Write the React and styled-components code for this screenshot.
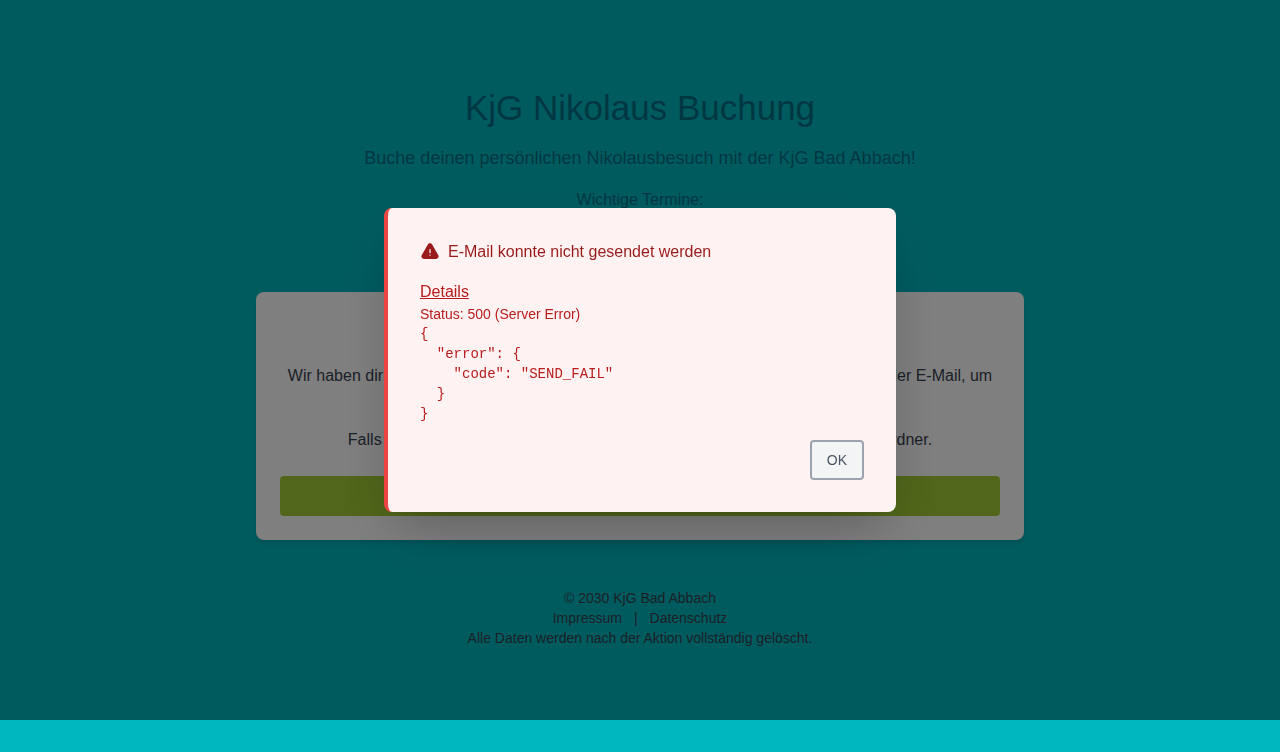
import React from "react";
import styled, { createGlobalStyle, css } from "styled-components";

const GlobalStyle = createGlobalStyle`
  *, *::before, *::after { box-sizing: border-box; }
  body {
    margin: 0;
    background: #00b7bf;
    color: #374151;
    font-family: "Liberation Sans", Arial, sans-serif;
    font-size: 16px;
    line-height: 24px;
  }
  h1, h2, p, ul, pre { margin: 0; padding: 0; font-weight: 400; }
  button { font-family: inherit; cursor: pointer; }
`;

const Page = styled.div`
  min-height: 100vh;
  padding: 88px 24px 72px;
`;

const Content = styled.main`
  max-width: 768px;
  margin: 0 auto;
  text-align: center;
`;

const Header = styled.header`
  color: #006f86;
  margin-bottom: 32px;
`;

const Title = styled.h1`
  font-size: 35px;
  line-height: 40px;
  margin-bottom: 16px;
`;

const Subtitle = styled.p`
  font-size: 18px;
  line-height: 28px;
  margin-bottom: 16px;
`;

const DateList = styled.ul`
  list-style: none;
`;

const Card = styled.section`
  padding: 24px;
  border-radius: 8px;
  background: #fff;
  box-shadow: 0 4px 6px -1px rgba(0, 0, 0, 0.1), 0 2px 4px -2px rgba(0, 0, 0, 0.1);
`;

const CardTitle = styled.h2`
  font-size: 24px;
  line-height: 32px;
  margin-bottom: 16px;
`;

const CardText = styled.p`
  margin-bottom: ${(p) => (p.$last ? 24 : 16)}px;
`;

const buttonBase = css`
  height: 40px;
  padding: 0 15px;
  border-radius: 4px;
  font-size: 14px;
  line-height: 20px;
`;

const ResendButton = styled.button`
  ${buttonBase}
  display: block;
  width: 100%;
  border: 0;
  background: #a2cd35;
  color: #fff;
`;

const Footer = styled.footer`
  margin-top: 48px;
  font-size: 14px;
  line-height: 20px;
`;

const FooterLinks = styled.nav`
  display: flex;
  justify-content: center;
  gap: 12px;
`;

const FooterLink = styled.a`
  color: inherit;
  text-decoration: none;
`;

const Backdrop = styled.div`
  position: fixed;
  inset: 0 0 32px;
  display: flex;
  align-items: center;
  justify-content: center;
  padding: 16px;
  background: rgba(0, 0, 0, 0.5);
`;

const Dialog = styled.div`
  width: 100%;
  max-width: 512px;
  padding: 32px;
  border-left: 4px solid #ef4444;
  border-radius: 8px;
  background: #fef2f2;
  color: #b91c1c;
  box-shadow: 0 25px 50px -12px rgba(0, 0, 0, 0.25);
`;

const DialogHeader = styled.div`
  display: flex;
  align-items: center;
  gap: 8px;
  margin-bottom: 16px;
  color: #991b1b;
`;

const DialogTitle = styled.h2`
  font-size: 16px;
  line-height: 24px;
`;

const DetailsLabel = styled.p`
  text-decoration: underline;
`;

const Status = styled.p`
  font-size: 14px;
  line-height: 20px;
`;

const ErrorBody = styled.pre`
  font-family: "Liberation Mono", "Courier New", monospace;
  font-size: 14px;
  line-height: 20px;
  white-space: pre-wrap;
`;

const DialogActions = styled.div`
  display: flex;
  justify-content: flex-end;
  margin-top: 16px;
`;

const OkButton = styled.button`
  ${buttonBase}
  border: 2px solid #9ca3af;
  background: #f3f4f6;
  color: #4b5563;
`;

const WarningIcon = () => (
  <svg width="20" height="20" viewBox="0 0 24 24" fill="currentColor" aria-hidden="true">
    <path
      fillRule="evenodd"
      clipRule="evenodd"
      d="M9.401 3.003c1.155-2 4.043-2 5.197 0l7.355 12.748c1.154 2-.29 4.5-2.599 4.5H4.645c-2.309 0-3.752-2.5-2.598-4.5L9.4 3.003ZM12 8.25a.75.75 0 0 1 .75.75v3.75a.75.75 0 0 1-1.5 0V9a.75.75 0 0 1 .75-.75Zm0 8.25a.75.75 0 1 0 0-1.5.75.75 0 0 0 0 1.5Z"
    />
  </svg>
);

const errorText = JSON.stringify({ error: { code: "SEND_FAIL" } }, null, 2);

export default function App() {
  return (
    <>
      <GlobalStyle />
      <Page>
        <Content>
          <Header>
            <Title>KjG Nikolaus Buchung</Title>
            <Subtitle>Buche deinen persönlichen Nikolausbesuch mit der KjG Bad Abbach!</Subtitle>
            <p>Wichtige Termine:</p>
            <DateList>
              <li>5. Dezember</li>
              <li>6. Dezember</li>
            </DateList>
          </Header>
          <Card>
            <CardTitle>E-Mail bestätigen</CardTitle>
            <CardText>
              Wir haben dir eine E-Mail mit einem Link geschickt. Bitte klicke direkt auf den Link in der E-Mail, um
              <br />
              deine Buchung fortzusetzen.
            </CardText>
            <CardText $last>
              Falls du keine E-Mail erhalten hast, überprüfe bitte auch mal deinen Spam-Ordner.
            </CardText>
            <ResendButton type="button">E-Mail erneut senden</ResendButton>
          </Card>
          <Footer>
            <p>© 2030 KjG Bad Abbach</p>
            <FooterLinks>
              <FooterLink href="#impressum">Impressum</FooterLink>
              <span>|</span>
              <FooterLink href="#datenschutz">Datenschutz</FooterLink>
            </FooterLinks>
            <p>Alle Daten werden nach der Aktion vollständig gelöscht.</p>
          </Footer>
        </Content>
      </Page>
      <Backdrop>
        <Dialog role="alertdialog" aria-modal="true" aria-labelledby="dialog-title">
          <DialogHeader>
            <WarningIcon />
            <DialogTitle id="dialog-title">E-Mail konnte nicht gesendet werden</DialogTitle>
          </DialogHeader>
          <DetailsLabel>Details</DetailsLabel>
          <Status>Status: 500 (Server Error)</Status>
          <ErrorBody>{errorText}</ErrorBody>
          <DialogActions>
            <OkButton type="button">OK</OkButton>
          </DialogActions>
        </Dialog>
      </Backdrop>
    </>
  );
}
